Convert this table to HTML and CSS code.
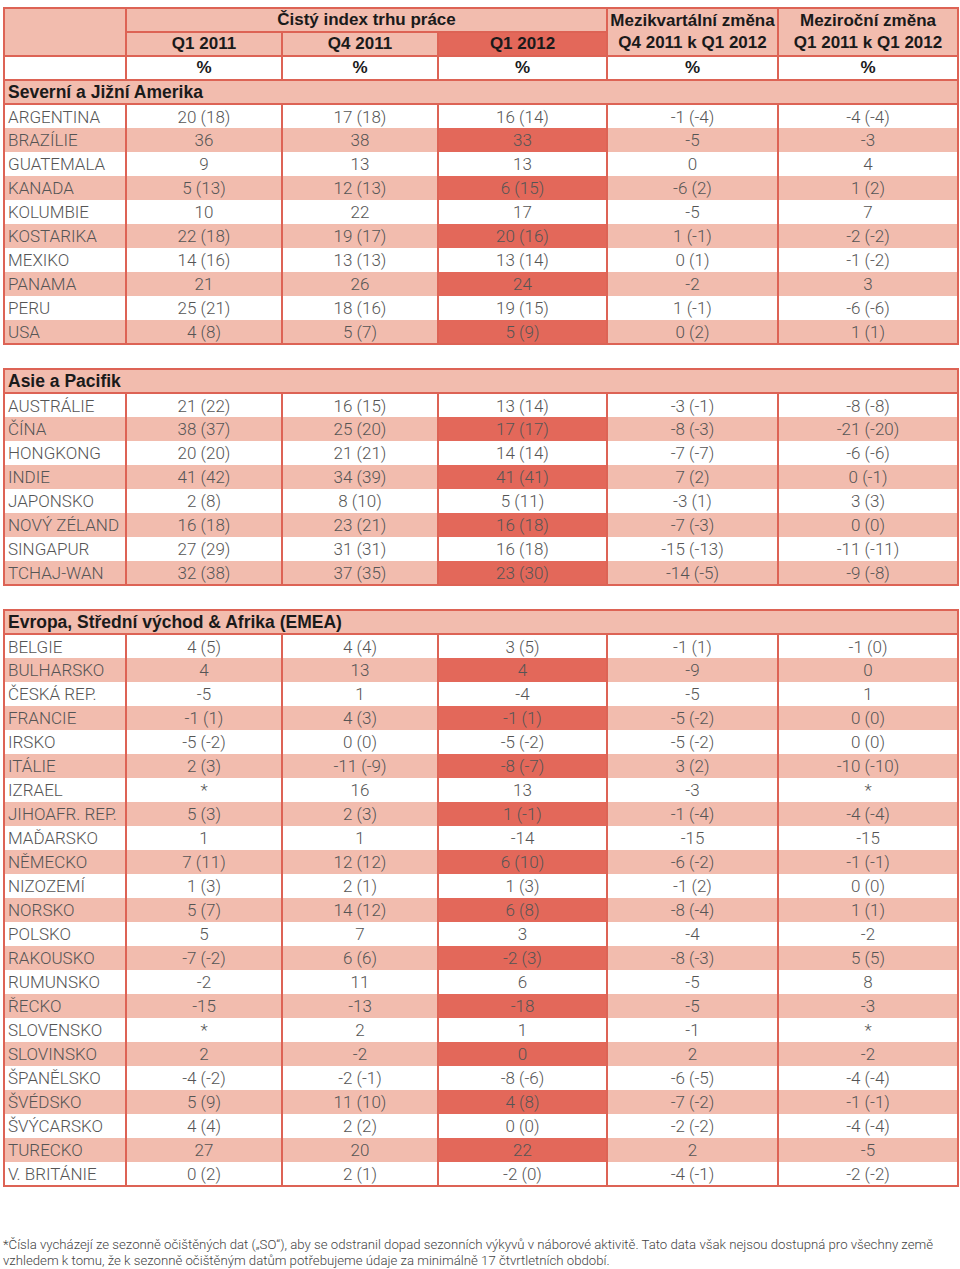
FILE: index.html
```html
<!DOCTYPE html>
<html lang="cs">
<head>
<meta charset="utf-8">
<title>Čistý index trhu práce</title>
<link rel="stylesheet" href="styles.css">
</head>
<body>
<div class="page">
<table class="tbl">
<colgroup><col class="c0"><col class="c1"><col class="c2"><col class="c3"><col class="c4"><col class="c5"></colgroup>
<tr class="hrow">
  <th class="hl" rowspan="2"></th>
  <th class="hp" colspan="3">Čistý index trhu práce</th>
  <th class="hp two" rowspan="2">Mezikvartální změna<br>Q4 2011 k Q1 2012</th>
  <th class="hp two" rowspan="2">Meziroční změna<br>Q1 2011 k Q1 2012</th>
</tr>
<tr class="hrow">
  <th class="hp">Q1 2011</th>
  <th class="hp">Q4 2011</th>
  <th class="hd">Q1 2012</th>
</tr>
<tr class="hrow">
  <th class="hw"></th><th class="hw">%</th><th class="hw">%</th><th class="hw">%</th><th class="hw">%</th><th class="hw">%</th>
</tr>
<tr class="sec"><th colspan="6">Severní a Jižní Amerika</th></tr>
<tr class="w first"><td>ARGENTINA</td><td>20 (18)</td><td>17 (18)</td><td>16 (14)</td><td>-1 (-4)</td><td>-4 (-4)</td></tr>
<tr class="p"><td>BRAZÍLIE</td><td>36</td><td>38</td><td>33</td><td>-5</td><td>-3</td></tr>
<tr class="w"><td>GUATEMALA</td><td>9</td><td>13</td><td>13</td><td>0</td><td>4</td></tr>
<tr class="p"><td>KANADA</td><td>5 (13)</td><td>12 (13)</td><td>6 (15)</td><td>-6 (2)</td><td>1 (2)</td></tr>
<tr class="w"><td>KOLUMBIE</td><td>10</td><td>22</td><td>17</td><td>-5</td><td>7</td></tr>
<tr class="p"><td>KOSTARIKA</td><td>22 (18)</td><td>19 (17)</td><td>20 (16)</td><td>1 (-1)</td><td>-2 (-2)</td></tr>
<tr class="w"><td>MEXIKO</td><td>14 (16)</td><td>13 (13)</td><td>13 (14)</td><td>0 (1)</td><td>-1 (-2)</td></tr>
<tr class="p"><td>PANAMA</td><td>21</td><td>26</td><td>24</td><td>-2</td><td>3</td></tr>
<tr class="w"><td>PERU</td><td>25 (21)</td><td>18 (16)</td><td>19 (15)</td><td>1 (-1)</td><td>-6 (-6)</td></tr>
<tr class="p"><td>USA</td><td>4 (8)</td><td>5 (7)</td><td>5 (9)</td><td>0 (2)</td><td>1 (1)</td></tr>
</table>

<table class="tbl gap">
<colgroup><col class="c0"><col class="c1"><col class="c2"><col class="c3"><col class="c4"><col class="c5"></colgroup>
<tr class="sec"><th colspan="6">Asie a Pacifik</th></tr>
<tr class="w first"><td>AUSTRÁLIE</td><td>21 (22)</td><td>16 (15)</td><td>13 (14)</td><td>-3 (-1)</td><td>-8 (-8)</td></tr>
<tr class="p"><td>ČÍNA</td><td>38 (37)</td><td>25 (20)</td><td>17 (17)</td><td>-8 (-3)</td><td>-21 (-20)</td></tr>
<tr class="w"><td>HONGKONG</td><td>20 (20)</td><td>21 (21)</td><td>14 (14)</td><td>-7 (-7)</td><td>-6 (-6)</td></tr>
<tr class="p"><td>INDIE</td><td>41 (42)</td><td>34 (39)</td><td>41 (41)</td><td>7 (2)</td><td>0 (-1)</td></tr>
<tr class="w"><td>JAPONSKO</td><td>2 (8)</td><td>8 (10)</td><td>5 (11)</td><td>-3 (1)</td><td>3 (3)</td></tr>
<tr class="p"><td>NOVÝ ZÉLAND</td><td>16 (18)</td><td>23 (21)</td><td>16 (18)</td><td>-7 (-3)</td><td>0 (0)</td></tr>
<tr class="w"><td>SINGAPUR</td><td>27 (29)</td><td>31 (31)</td><td>16 (18)</td><td>-15 (-13)</td><td>-11 (-11)</td></tr>
<tr class="p"><td>TCHAJ-WAN</td><td>32 (38)</td><td>37 (35)</td><td>23 (30)</td><td>-14 (-5)</td><td>-9 (-8)</td></tr>
</table>

<table class="tbl gap">
<colgroup><col class="c0"><col class="c1"><col class="c2"><col class="c3"><col class="c4"><col class="c5"></colgroup>
<tr class="sec"><th colspan="6">Evropa, Střední východ &amp; Afrika (EMEA)</th></tr>
<tr class="w first"><td>BELGIE</td><td>4 (5)</td><td>4 (4)</td><td>3 (5)</td><td>-1 (1)</td><td>-1 (0)</td></tr>
<tr class="p"><td>BULHARSKO</td><td>4</td><td>13</td><td>4</td><td>-9</td><td>0</td></tr>
<tr class="w"><td>ČESKÁ REP.</td><td>-5</td><td>1</td><td>-4</td><td>-5</td><td>1</td></tr>
<tr class="p"><td>FRANCIE</td><td>-1 (1)</td><td>4 (3)</td><td>-1 (1)</td><td>-5 (-2)</td><td>0 (0)</td></tr>
<tr class="w"><td>IRSKO</td><td>-5 (-2)</td><td>0 (0)</td><td>-5 (-2)</td><td>-5 (-2)</td><td>0 (0)</td></tr>
<tr class="p"><td>ITÁLIE</td><td>2 (3)</td><td>-11 (-9)</td><td>-8 (-7)</td><td>3 (2)</td><td>-10 (-10)</td></tr>
<tr class="w"><td>IZRAEL</td><td>*</td><td>16</td><td>13</td><td>-3</td><td>*</td></tr>
<tr class="p"><td>JIHOAFR. REP.</td><td>5 (3)</td><td>2 (3)</td><td>1 (-1)</td><td>-1 (-4)</td><td>-4 (-4)</td></tr>
<tr class="w"><td>MAĎARSKO</td><td>1</td><td>1</td><td>-14</td><td>-15</td><td>-15</td></tr>
<tr class="p"><td>NĚMECKO</td><td>7 (11)</td><td>12 (12)</td><td>6 (10)</td><td>-6 (-2)</td><td>-1 (-1)</td></tr>
<tr class="w"><td>NIZOZEMÍ</td><td>1 (3)</td><td>2 (1)</td><td>1 (3)</td><td>-1 (2)</td><td>0 (0)</td></tr>
<tr class="p"><td>NORSKO</td><td>5 (7)</td><td>14 (12)</td><td>6 (8)</td><td>-8 (-4)</td><td>1 (1)</td></tr>
<tr class="w"><td>POLSKO</td><td>5</td><td>7</td><td>3</td><td>-4</td><td>-2</td></tr>
<tr class="p"><td>RAKOUSKO</td><td>-7 (-2)</td><td>6 (6)</td><td>-2 (3)</td><td>-8 (-3)</td><td>5 (5)</td></tr>
<tr class="w"><td>RUMUNSKO</td><td>-2</td><td>11</td><td>6</td><td>-5</td><td>8</td></tr>
<tr class="p"><td>ŘECKO</td><td>-15</td><td>-13</td><td>-18</td><td>-5</td><td>-3</td></tr>
<tr class="w"><td>SLOVENSKO</td><td>*</td><td>2</td><td>1</td><td>-1</td><td>*</td></tr>
<tr class="p"><td>SLOVINSKO</td><td>2</td><td>-2</td><td>0</td><td>2</td><td>-2</td></tr>
<tr class="w"><td>ŠPANĚLSKO</td><td>-4 (-2)</td><td>-2 (-1)</td><td>-8 (-6)</td><td>-6 (-5)</td><td>-4 (-4)</td></tr>
<tr class="p"><td>ŠVÉDSKO</td><td>5 (9)</td><td>11 (10)</td><td>4 (8)</td><td>-7 (-2)</td><td>-1 (-1)</td></tr>
<tr class="w"><td>ŠVÝCARSKO</td><td>4 (4)</td><td>2 (2)</td><td>0 (0)</td><td>-2 (-2)</td><td>-4 (-4)</td></tr>
<tr class="p"><td>TURECKO</td><td>27</td><td>20</td><td>22</td><td>2</td><td>-5</td></tr>
<tr class="w"><td>V. BRITÁNIE</td><td>0 (2)</td><td>2 (1)</td><td>-2 (0)</td><td>-4 (-1)</td><td>-2 (-2)</td></tr>
</table>

<p class="note">*Čísla vycházejí ze sezonně očištěných dat („SO“), aby se odstranil dopad sezonních výkyvů v náborové aktivitě. Tato data však nejsou dostupná pro všechny země<br>vzhledem k tomu, že k sezonně očištěným datům potřebujeme údaje za minimálně 17 čtvrtletních období.</p>
</div>
</body>
</html>
```
FILE: styles.css
```css
html, body {
  margin: 0;
  padding: 0;
  background: #ffffff;
}
.page {
  padding: 7px 0 0 3px;
  font-family: "Liberation Sans", Arial, sans-serif;
}
.tbl {
  border-collapse: collapse;
  table-layout: fixed;
  width: 954px;
  border: 2px solid #dd6355;
}
.gap {
  margin-top: 23px;
}
.c0 { width: 122px; }
.c1 { width: 156px; }
.c2 { width: 156px; }
.c3 { width: 169px; }
.c4 { width: 171px; }
.c5 { width: 180px; }
.tbl tr {
  height: 24px;
}
.tbl th, .tbl td {
  padding: 0;
  height: 22px;
  line-height: 22px;
  border-left: 2px solid #dd6355;
  border-right: 2px solid #dd6355;
  white-space: nowrap;
  overflow: hidden;
}
.hrow th {
  font-weight: bold;
  font-size: 17px;
  color: #1a1a1a;
  text-align: center;
  border: 2px solid #dd6355;
}
.hl, .hp { background: #f2bcae; }
.hd { background: #e3685a; }
.hw { background: #ffffff; }
.two { line-height: 24px; }
.sec th {
  background: #f2bcae;
  font-weight: bold;
  font-size: 17.5px;
  color: #1a1a1a;
  text-align: left;
  padding-left: 3px;
  border-bottom: 2px solid #dd6355;
}
.tbl td {
  font-family: "Roboto", "Liberation Sans", sans-serif;
  font-weight: 300;
  font-size: 17px;
  color: #555555;
  text-align: center;
  border-top: 0;
  border-bottom: 0;
}
.tbl td:first-child {
  text-align: left;
  padding-left: 3px;
}
.w td { background: #ffffff; }
.p td { background: #f2bcae; }
.p td:nth-child(4) { background: #e3685a; }
.note {
  margin: 50px 0 0 0;
  font-family: "Roboto", "Liberation Sans", sans-serif;
  font-weight: 300;
  font-size: 13.2px;
  line-height: 16px;
  color: #444444;
}
```
